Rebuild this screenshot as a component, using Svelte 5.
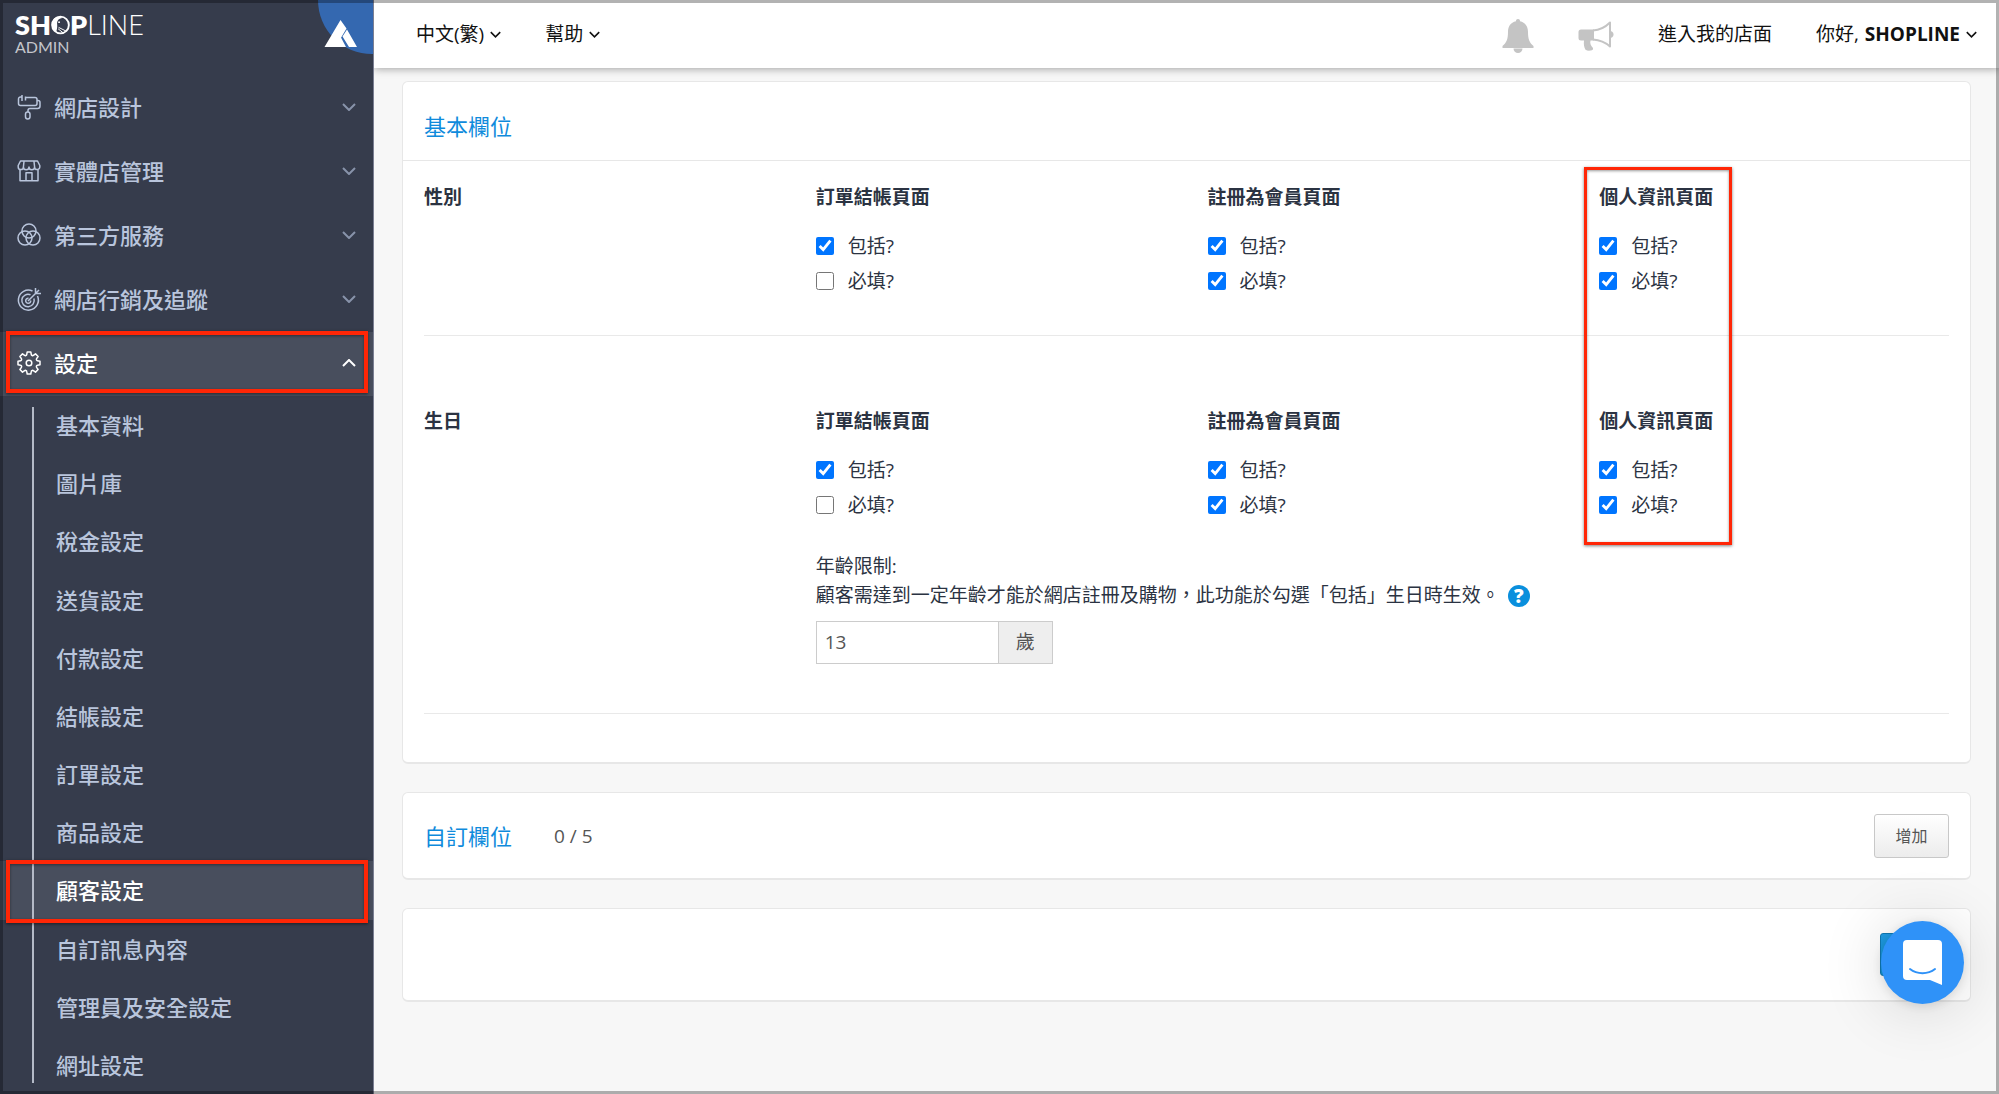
<script>
	const menus = [
		{ icon: 'roller', label: '網店設計' },
		{ icon: 'store', label: '實體店管理' },
		{ icon: 'circles', label: '第三方服務' },
		{ icon: 'target', label: '網店行銷及追蹤' },
		{ icon: 'gear', label: '設定', open: true }
	];

	const settings = [
		'基本資料',
		'圖片庫',
		'稅金設定',
		'送貨設定',
		'付款設定',
		'結帳設定',
		'訂單設定',
		'商品設定',
		'顧客設定',
		'自訂訊息內容',
		'管理員及安全設定',
		'網址設定'
	];
	const current = '顧客設定';

	let fields = $state([
		{
			id: 'gender',
			label: '性別',
			pages: [
				{ title: '訂單結帳頁面', include: true, required: false },
				{ title: '註冊為會員頁面', include: true, required: true },
				{ title: '個人資訊頁面', include: true, required: true }
			]
		},
		{
			id: 'birthday',
			label: '生日',
			pages: [
				{ title: '訂單結帳頁面', include: true, required: false },
				{ title: '註冊為會員頁面', include: true, required: true },
				{ title: '個人資訊頁面', include: true, required: true }
			]
		}
	]);

	let minAge = $state('13');
</script>

{#snippet chevron(size)}
	<svg class="chevron {size}" viewBox="0 0 14 8" aria-hidden="true">
		<path d="M1 1l6 6 6-6" />
	</svg>
{/snippet}

{#snippet menuIcon(name)}
	<svg class="menu-icon" viewBox="0 0 24 24" aria-hidden="true">
		{#if name === 'roller'}
			<path d="M5 0v6M8.500 1.500v4M5 2H3.500A2 2 0 0 0 1.500 4v4.500a2 2 0 0 0 2 2h14.500a2 2 0 0 0 2-2V4.500A2 2 0 0 0 18 2.500H8.500" />
			<path d="M20 5.500h1a2 2 0 0 1 2 2v3.500a2.500 2.500 0 0 1-2.500 2.500h-7.500a2 2 0 0 0-2 2V17" />
			<rect x="8.500" y="17" width="4.500" height="7" rx="2.200" />
		{:else if name === 'store'}
			<path d="M3.500 2h17L22.800 6.500v1.500a2.600 2.600 0 0 1-5.200 0 2.800 2.800 0 0 1-5.600 0 2.800 2.800 0 0 1-5.600 0 2.600 2.600 0 0 1-5.200 0V6.500zM7 2.500L6.400 8M17 2.500l.6 5.500" />
			<path d="M3 10.500v11.300h18V10.500M9 21.800v-8h6v8" />
		{:else if name === 'circles'}
			<circle cx="12" cy="8" r="7" />
			<circle cx="8" cy="15" r="7" />
			<circle cx="16" cy="15" r="7" />
		{:else if name === 'target'}
			<path d="M15.500 4A10 10 0 1 0 20.500 9" />
			<path d="M13.500 7.800A6.200 6.200 0 1 0 16.900 11.500" />
			<path d="M11.500 11.300a2.500 2.500 0 1 0 2.200 2.200" />
			<path d="M11 14l8-8M18.500 1v5.500H24M18.500 6.500L22 3" />
		{:else}
			<path d="M10.200 1h3.600l.5 2.600q.1.700.800.900.7.300 1.300-.1l2.100-1.500 2.600 2.600-1.500 2.100q-.4.600-.1 1.300.2.700.9.800l2.600.5v3.600l-2.600.5q-.7.100-.9.800-.3.700.1 1.300l1.500 2.100-2.600 2.600-2.100-1.500q-.6-.4-1.300-.1-.7.200-.8.900l-.5 2.600h-3.600l-.5-2.600q-.1-.7-.8-.9-.7-.3-1.300.1l-2.100 1.500-2.600-2.600 1.500-2.100q.4-.6.100-1.300-.2-.7-.9-.8L1 13.800v-3.600l2.600-.5q.7-.1.900-.8.300-.7-.1-1.300L2.900 5.500l2.600-2.600 2.100 1.500q.6.400 1.300.1.700-.2.800-.9z" />
			<circle cx="12" cy="12" r="2.800" />
		{/if}
	</svg>
{/snippet}

<div class="layout">
	<aside class="sidebar">
		<div class="brand">
			<div class="logo">
				<span class="wordmark"><b>SH</b><svg class="logo-o" viewBox="0 0 20 21" aria-hidden="true">
						<circle cx="10" cy="10.500" r="8.800" />
						<path class="face" d="M1.500 7C3.500 1.500 9 1 12 3c-4 .5-6 3-5.500 7 .3 3.500-.5 6-1 8C1.500 15.500 0 11 1.500 7z" />
						<circle class="eye" cx="8.500" cy="7.500" r="1" />
						<path class="whisker" d="M8 13l8 4M7.500 14.500l5 4" />
					</svg><b>P</b>LINE</span>
				<span class="admin">ADMIN</span>
			</div>
			<svg class="corner" viewBox="0 0 55 55" aria-hidden="true">
				<circle cx="54" cy="0" r="54" />
				<path d="M22.500 20L6.500 47h11L28.500 28.500zM29 29.500l-4.500 7 6.500 10.500h8zM23 37.500L17.500 47h10.500z" />
			</svg>
		</div>

		<nav class="menu">
			{#each menus as item}
				<button class="menu-item" class:open={item.open} aria-expanded={!!item.open}>
					{@render menuIcon(item.icon)}
					<span>{item.label}</span>
					{@render chevron('large')}
				</button>
			{/each}
			<div class="submenu">
				{#each settings as name}
					<a href="#{name}" class:current={name === current}>{name}</a>
				{/each}
			</div>
		</nav>
	</aside>

	<div class="page">
		<header class="topbar">
			<button>中文(繁) {@render chevron('small')}</button>
			<button>幫助 {@render chevron('small')}</button>
			<div class="spacer"></div>
			<button class="notify" aria-label="通知">
				<svg width="32" height="34" viewBox="0 0 32 34" aria-hidden="true">
					<path d="M16 0a2 2 0 0 1 2 2.200C23.500 3.500 26 7.500 26 13c0 7 1.500 11 5.500 14v2H.5v-2C4.500 24 6 20 6 13 6 7.500 8.500 3.500 14 2.200A2 2 0 0 1 16 0zM11.500 29.500h9a4.500 4.500 0 0 1-9 0z" />
				</svg>
			</button>
			<button class="notify" aria-label="公告">
				<svg width="36" height="32" viewBox="0 0 36 32" aria-hidden="true">
					<path d="M3 9.500h13v11h-3.500c-.8 3 .3 5 2.500 7.500v1.500c-2 1.500-5.500 1.500-7.500.3C6 27 5.500 24 6 20.500H3a2.500 2.500 0 0 1-2.500-2.500v-6A2.500 2.500 0 0 1 3 9.500z" />
					<path class="horn" d="M15 10.500C22 10 27 7.500 32 2.500v24C27 22 22 20 15 19.500" />
					<path d="M32 11c2 0 3.500 1.500 3.500 3.500S34 18 32 18z" />
				</svg>
			</button>
			<a href="#store">進入我的店面</a>
			<button>你好, <b>SHOPLINE</b> {@render chevron('small')}</button>
		</header>

		<main>
			<section class="card">
				<h2 class="card-head">基本欄位</h2>
				<div class="card-body">
					{#each fields as field}
						<div class="field" class:with-age={field.id === 'birthday'}>
							<h3>{field.label}</h3>
							{#each field.pages as page}
								<div class="option">
									<h3>{page.title}</h3>
									<label><input type="checkbox" bind:checked={page.include} /> 包括?</label>
									<label><input type="checkbox" bind:checked={page.required} /> 必填?</label>
								</div>
							{/each}
							{#if field.id === 'birthday'}
								<div class="age">
									<label for="min-age">年齡限制:</label>
									<p>
										顧客需達到一定年齡才能於網店註冊及購物，此功能於勾選「包括」生日時生效。
										<button class="help" aria-label="說明">?</button>
									</p>
									<div class="age-input">
										<input id="min-age" type="text" bind:value={minAge} />
										<span>歲</span>
									</div>
								</div>
							{/if}
						</div>
					{/each}
					<div class="highlight"></div>
				</div>
			</section>

			<section class="card row">
				<h2>自訂欄位</h2>
				<span class="count">0 / 5</span>
				<button class="add">增加</button>
			</section>

			<section class="card row save-row">
				<button class="save" aria-label="更新"></button>
			</section>
		</main>
	</div>
</div>

<button class="chat" aria-label="Chat">
	<svg width="39" height="45" viewBox="0 0 39 45" aria-hidden="true">
		<path d="M4 0h31a4 4 0 0 1 4 4v41l-12-5H4a4 4 0 0 1-4-4V4a4 4 0 0 1 4-4z" />
		<path class="smile" d="M7 29c7 5.500 18 5.500 25 0" />
	</svg>
</button>
<div class="frame"></div>

<style>
	:global(body) {
		background: #f7f7f7;
		font-family: 'Open Sans', 'Noto Sans CJK TC', sans-serif;
		font-size: 19px;
		line-height: 28px;
		color: #2b3342;
	}
	h2,
	h3,
	p {
		margin: 0;
	}
	button {
		font: inherit;
		color: inherit;
		background: none;
		border: 0;
		padding: 0;
		cursor: pointer;
	}
	a {
		color: inherit;
		text-decoration: none;
	}
	.layout {
		display: flex;
		min-height: 100vh;
	}

	/* sidebar */
	.sidebar {
		flex: 0 0 374px;
		display: flex;
		flex-direction: column;
		background: #363c4c;
		border-right: 1px solid #7b7f92;
		box-sizing: border-box;
		width: 374px;
		color: #b9c5dc;
	}
	.brand {
		display: flex;
		justify-content: space-between;
		height: 76px;
	}
	.logo {
		display: flex;
		flex-direction: column;
		padding: 11px 0 0 15px;
		font-family: Lato, sans-serif;
	}
	.wordmark {
		display: flex;
		font-size: 27px;
		line-height: 27px;
		font-weight: 300;
		color: #fff;
	}
	.wordmark b {
		font-weight: 800;
	}
	.logo-o {
		width: 19px;
		height: 20px;
		margin-top: 4px;
		fill: none;
		stroke: #fff;
		stroke-width: 2;
	}
	.logo-o .face,
	.logo-o .eye {
		fill: #fff;
		stroke: none;
	}
	.logo-o .whisker {
		stroke-width: 1;
	}
	.admin {
		font-size: 16px;
		line-height: 18px;
		color: #c4c6cb;
	}
	.corner {
		width: 55px;
		height: 55px;
	}
	.corner circle {
		fill: #3468b0;
	}
	.corner path {
		fill: #fff;
	}
	.menu {
		flex: 1;
		display: flex;
		flex-direction: column;
		font-size: 22px;
		font-weight: 500;
	}
	.menu-item {
		display: flex;
		align-items: center;
		gap: 13px;
		height: 64px;
		padding: 0 17px 2px;
		text-align: left;
	}
	.menu-item span {
		flex: 1;
	}
	.menu-item .chevron {
		color: #8893aa;
	}
	.menu-item.open,
	.menu-item.open .chevron {
		color: #fff;
	}
	.menu-item.open,
	.submenu .current {
		position: relative;
		background: #484e5d;
		color: #fff;
	}
	.menu-item.open::after,
	.submenu .current::after,
	.highlight {
		content: '';
		position: absolute;
		box-sizing: border-box;
		border: 4px solid #ff2606;
		box-shadow: 0 1px 3px rgba(0, 0, 0, 0.5), inset 0 1px 3px rgba(0, 0, 0, 0.4);
		pointer-events: none;
	}
	.menu-item.open::after,
	.submenu .current::after {
		top: -1px;
		bottom: 3px;
		left: 6px;
		right: 5px;
	}
	.submenu .current::after {
		z-index: 2;
		bottom: -3px;
	}
	.menu-icon {
		width: 24px;
		height: 24px;
		overflow: visible;
		fill: none;
		stroke: currentColor;
		stroke-width: 1.500;
		stroke-linejoin: round;
	}
	.chevron {
		fill: none;
		stroke: currentColor;
		stroke-width: 2;
	}
	.chevron.large {
		width: 14px;
		height: 8px;
	}
	.open .chevron {
		transform: rotate(180deg);
	}
	.chevron.small {
		width: 11px;
		height: 7px;
	}
	.submenu {
		flex: 1;
		position: relative;
		display: flex;
		flex-direction: column;
	}
	.submenu::before {
		content: '';
		position: absolute;
		z-index: 1;
		top: 11px;
		bottom: 11px;
		left: 32px;
		width: 2px;
		background: #b4bac7;
	}
	.submenu a {
		flex: 1;
		display: flex;
		align-items: center;
		min-height: 44px;
		padding-left: 56px;
	}

	/* top bar */
	.page {
		flex: 1;
		min-width: 0;
	}
	.topbar {
		position: relative;
		display: flex;
		align-items: center;
		gap: 44px;
		height: 68px;
		padding: 0 22px 0 42px;
		background: #fff;
		box-shadow: 0 1px 8px rgba(0, 0, 0, 0.35);
		clip-path: inset(0 0 -12px 0);
		color: #111;
	}
	.topbar button {
		display: flex;
		align-items: center;
		gap: 6px;
	}
	.spacer {
		flex: 1;
	}
	.topbar .notify {
		padding-top: 3px;
		fill: #c4c4c4;
	}
	.horn {
		fill: none;
		stroke: #c4c4c4;
		stroke-width: 2;
		stroke-linejoin: round;
	}

	/* cards */
	main {
		display: flex;
		flex-direction: column;
		gap: 28px;
		padding: 13px 28px 28px;
	}
	.card {
		background: #fff;
		border: 1px solid #e7e7e7;
		border-bottom-width: 2px;
		border-radius: 6px;
	}
	h2 {
		font-size: 22px;
		font-weight: 400;
		color: #0f8bdc;
	}
	h3 {
		font-size: 19px;
		font-weight: 700;
	}
	.card-head {
		padding: 30px 21px 20px;
		border-bottom: 1px solid #e7e7e7;
	}
	.card-body {
		position: relative;
		padding-bottom: 48px;
	}
	.field {
		display: grid;
		grid-template-columns: repeat(4, 1fr);
		padding: 22px 0 38px;
		position: relative;
	}
	.field > * {
		padding-left: 21px;
	}
	.field::after {
		content: '';
		position: absolute;
		bottom: 0;
		left: 21px;
		right: 21px;
		height: 1px;
		padding: 0;
		background: #e9e9e9;
	}
	.field.with-age {
		padding: 71px 0 50px;
	}
	.option {
		display: flex;
		flex-direction: column;
	}
	.option h3 {
		margin-bottom: 17px;
	}
	.option label {
		display: flex;
		align-items: center;
		gap: 14px;
		height: 35px;
	}
	.option input {
		width: 18px;
		height: 18px;
		margin: 0;
		accent-color: #0075ff;
	}
	.age {
		grid-column: 2 / -1;
		margin-top: 30px;
		line-height: 29px;
	}
	.age p {
		display: flex;
		align-items: center;
		gap: 8px;
	}
	.help {
		width: 22px;
		height: 22px;
		border-radius: 50%;
		background: #0a8fdd;
		color: #fff;
		font-size: 19px;
		font-weight: 800;
		line-height: 22px;
	}
	.age-input {
		display: flex;
		width: 237px;
		height: 43px;
		box-sizing: border-box;
		margin-top: 11px;
		border: 1px solid #ccc;
		color: #555;
	}
	.age-input input {
		flex: 1;
		min-width: 0;
		padding: 0 8px;
		border: 0;
		border-right: 1px solid #ccc;
		font: inherit;
		color: inherit;
	}
	.age-input span {
		display: flex;
		align-items: center;
		padding: 0 17px;
		background: #eee;
	}
	.highlight {
		top: 6px;
		bottom: 217px;
		left: calc(75% + 6px);
		width: 148px;
		border-width: 3px;
	}
	.row {
		display: flex;
		align-items: center;
		gap: 42px;
		min-height: 85px;
		padding: 0 21px;
	}
	.count {
		color: #555;
	}
	.add {
		width: 75px;
		height: 44px;
		margin-left: auto;
		border: 1px solid #c8c8c8;
		border-radius: 3px;
		background: linear-gradient(#fff, #ececec);
		font-size: 16px;
		color: #555;
	}
	.save-row {
		min-height: 91px;
	}
	.save {
		width: 69px;
		height: 43px;
		margin-left: auto;
		border: 1px solid #0f79b3;
		border-radius: 3px;
		background: linear-gradient(#1f9be4, #1395cf);
	}
	.chat {
		position: fixed;
		right: 35px;
		bottom: 90px;
		width: 83px;
		height: 83px;
		border-radius: 50%;
		background: #2f92f8;
		box-shadow: 0 2px 12px rgba(0, 0, 0, 0.12), 0 4px 64px rgba(0, 0, 0, 0.16);
		display: flex;
		align-items: center;
		justify-content: center;
	}
	.chat path {
		fill: #fff;
	}
	.chat .smile {
		fill: none;
		stroke: #2f92f8;
		stroke-width: 2;
		stroke-linecap: round;
	}
	.frame {
		position: fixed;
		z-index: 5;
		inset: 0;
		border: 3px solid rgba(0, 0, 0, 0.3);
		pointer-events: none;
	}
</style>
